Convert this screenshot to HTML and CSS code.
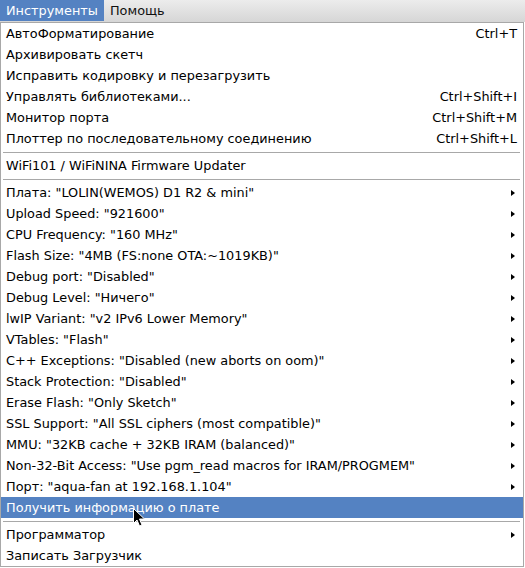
FILE: index.html
```html
<!DOCTYPE html>
<html>
<head>
<meta charset="utf-8">
<link rel="stylesheet" href="styles.css">
</head>
<body>
<div class="menubar">
  <div class="mb-item active">Инструменты</div>
  <div class="mb-item">Помощь</div>
</div>
<div class="popup">
  <div class="row"><span>АвтоФорматирование</span><span class="acc">Ctrl+T</span></div>
  <div class="row"><span>Архивировать скетч</span></div>
  <div class="row"><span>Исправить кодировку и перезагрузить</span></div>
  <div class="row"><span>Управлять библиотеками...</span><span class="acc">Ctrl+Shift+I</span></div>
  <div class="row"><span>Монитор порта</span><span class="acc">Ctrl+Shift+M</span></div>
  <div class="row"><span>Плоттер по последовательному соединению</span><span class="acc">Ctrl+Shift+L</span></div>
  <div class="sep"></div>
  <div class="row"><span>WiFi101 / WiFiNINA Firmware Updater</span></div>
  <div class="sep"></div>
  <div class="row sub"><span>Плата: "LOLIN(WEMOS) D1 R2 &amp; mini"</span><i class="arrow"></i></div>
  <div class="row sub"><span>Upload Speed: "921600"</span><i class="arrow"></i></div>
  <div class="row sub"><span>CPU Frequency: "160 MHz"</span><i class="arrow"></i></div>
  <div class="row sub"><span>Flash Size: "4MB (FS:none OTA:~1019KB)"</span><i class="arrow"></i></div>
  <div class="row sub"><span>Debug port: "Disabled"</span><i class="arrow"></i></div>
  <div class="row sub"><span>Debug Level: "Ничего"</span><i class="arrow"></i></div>
  <div class="row sub"><span>lwIP Variant: "v2 IPv6 Lower Memory"</span><i class="arrow"></i></div>
  <div class="row sub"><span>VTables: "Flash"</span><i class="arrow"></i></div>
  <div class="row sub"><span>C++ Exceptions: "Disabled (new aborts on oom)"</span><i class="arrow"></i></div>
  <div class="row sub"><span>Stack Protection: "Disabled"</span><i class="arrow"></i></div>
  <div class="row sub"><span>Erase Flash: "Only Sketch"</span><i class="arrow"></i></div>
  <div class="row sub"><span>SSL Support: "All SSL ciphers (most compatible)"</span><i class="arrow"></i></div>
  <div class="row sub"><span>MMU: "32KB cache + 32KB IRAM (balanced)"</span><i class="arrow"></i></div>
  <div class="row sub"><span>Non-32-Bit Access: "Use pgm_read macros for IRAM/PROGMEM"</span><i class="arrow"></i></div>
  <div class="row sub"><span>Порт: "aqua-fan at 192.168.1.104"</span><i class="arrow"></i></div>
  <div class="row hl"><span>Получить информацию о плате</span></div>
  <div class="sep"></div>
  <div class="row sub"><span>Программатор</span><i class="arrow"></i></div>
  <div class="row"><span>Записать Загрузчик</span></div>
  <svg class="cursor" width="13" height="20" viewBox="0 0 13 20">
    <path d="M0.5 0.5 L0.5 15.5 L4 12 L6.5 18 L9 17 L6.5 11 L11.5 11 Z" fill="#000" stroke="#fff" stroke-width="1"/>
  </svg>
</div>
</body>
</html>
```
FILE: styles.css
```css
html, body {
  margin: 0;
  padding: 0;
  background: #ffffff;
}
body {
  font-family: "DejaVu Sans", sans-serif;
  font-size: 12.85px;
  color: #000;
  width: 525px;
  height: 568px;
  overflow: hidden;
}
.menubar {
  display: flex;
  height: 22px;
  background: linear-gradient(#ececec, #d6d6d6);
}
.mb-item {
  height: 21px;
  line-height: 21px;
  padding: 0 6px 0 6px;
  color: #111;
}
.mb-item.active {
  background: #5482c2;
  color: #fff;
}
.popup {
  position: relative;
  width: 522px;
  border: 1px solid #a8a8a8;
  background: #fff;
}
.row {
  display: flex;
  justify-content: space-between;
  align-items: center;
  height: 21px;
  padding: 0 6px 0 5px;
  white-space: nowrap;
}
.row.sub {
  padding-right: 8px;
}
.row.hl {
  background: #5482c2;
  color: #fff;
}
.acc {
  color: #000;
}
.arrow {
  width: 0;
  height: 0;
  border-top: 3.5px solid transparent;
  border-bottom: 3.5px solid transparent;
  border-left: 4px solid #000;
}
.sep {
  height: 6px;
  display: flex;
  align-items: center;
  padding: 0 3px 0 2px;
}
.sep::before {
  content: "";
  flex: 1;
  height: 1px;
  background: #a8a8a8;
}
.cursor {
  position: absolute;
  left: 132px;
  top: 485px;
}
```
